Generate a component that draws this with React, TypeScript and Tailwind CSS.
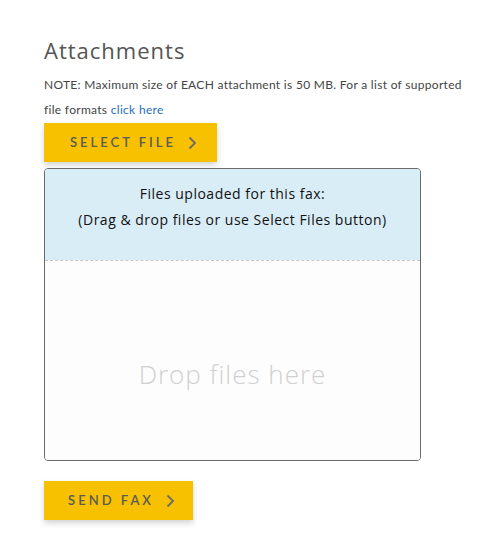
import React from "react";

const Chevron = () => (
  <svg width="9" height="14" viewBox="0 0 9 14" fill="none" className="ml-[12px]">
    <path d="M1.5 1.5L7 7L1.5 12.5" stroke="#6b6b6b" strokeWidth="1.8" />
  </svg>
);

const YellowButton = ({ label, width }: { label: string; width: string }) => (
  <button
    className={`flex h-[39px] items-center justify-center bg-[#f7c100] pl-[6px] font-['Lato',sans-serif] text-[13px] font-semibold tracking-[3px] text-[#5a5a5a] shadow-[0_3px_6px_rgba(0,0,0,0.18)] ${width}`}
  >
    {label}
    <Chevron />
  </button>
);

export default function App() {
  return (
    <div className="min-h-[553px] bg-white pl-[44px] pr-[20px] pt-[36px] font-['Open_Sans',sans-serif]">
      <h2 className="text-[22px] leading-[28px] tracking-[1px] text-[#555]">Attachments</h2>
      <p className="mt-[8px] w-[425px] font-['Lato',sans-serif] text-[12px] leading-[25px] tracking-[0.3px] text-[#444]">
        NOTE: Maximum size of EACH attachment is 50 MB. For a list of supported file formats{" "}
        <a href="#" className="text-[#2a6ebb]">
          click here
        </a>
      </p>
      <div className="mt-[1px]">
        <YellowButton label="SELECT FILE" width="w-[173px]" />
      </div>
      <div className="mt-[6px] flex h-[293px] w-[377px] flex-col overflow-hidden rounded-[4px] border border-[#6a6a6a]">
        <div className="flex h-[91px] flex-col items-center bg-[#d9edf7] pt-[12px] text-[14px] font-medium leading-[26px] tracking-[0.5px] text-[#111]">
          <div>Files uploaded for this fax:</div>
          <div>(Drag &amp; drop files or use Select Files button)</div>
        </div>
        <div className="flex flex-1 items-center justify-center border-t border-dashed border-[#c8c8c8] bg-[#fdfdfd] pt-[28px] text-[26px] font-light tracking-[1px] text-[#d0d0d0]">
          Drop files here
        </div>
      </div>
      <div className="mt-[20px]">
        <YellowButton label="SEND FAX" width="w-[149px]" />
      </div>
    </div>
  );
}
